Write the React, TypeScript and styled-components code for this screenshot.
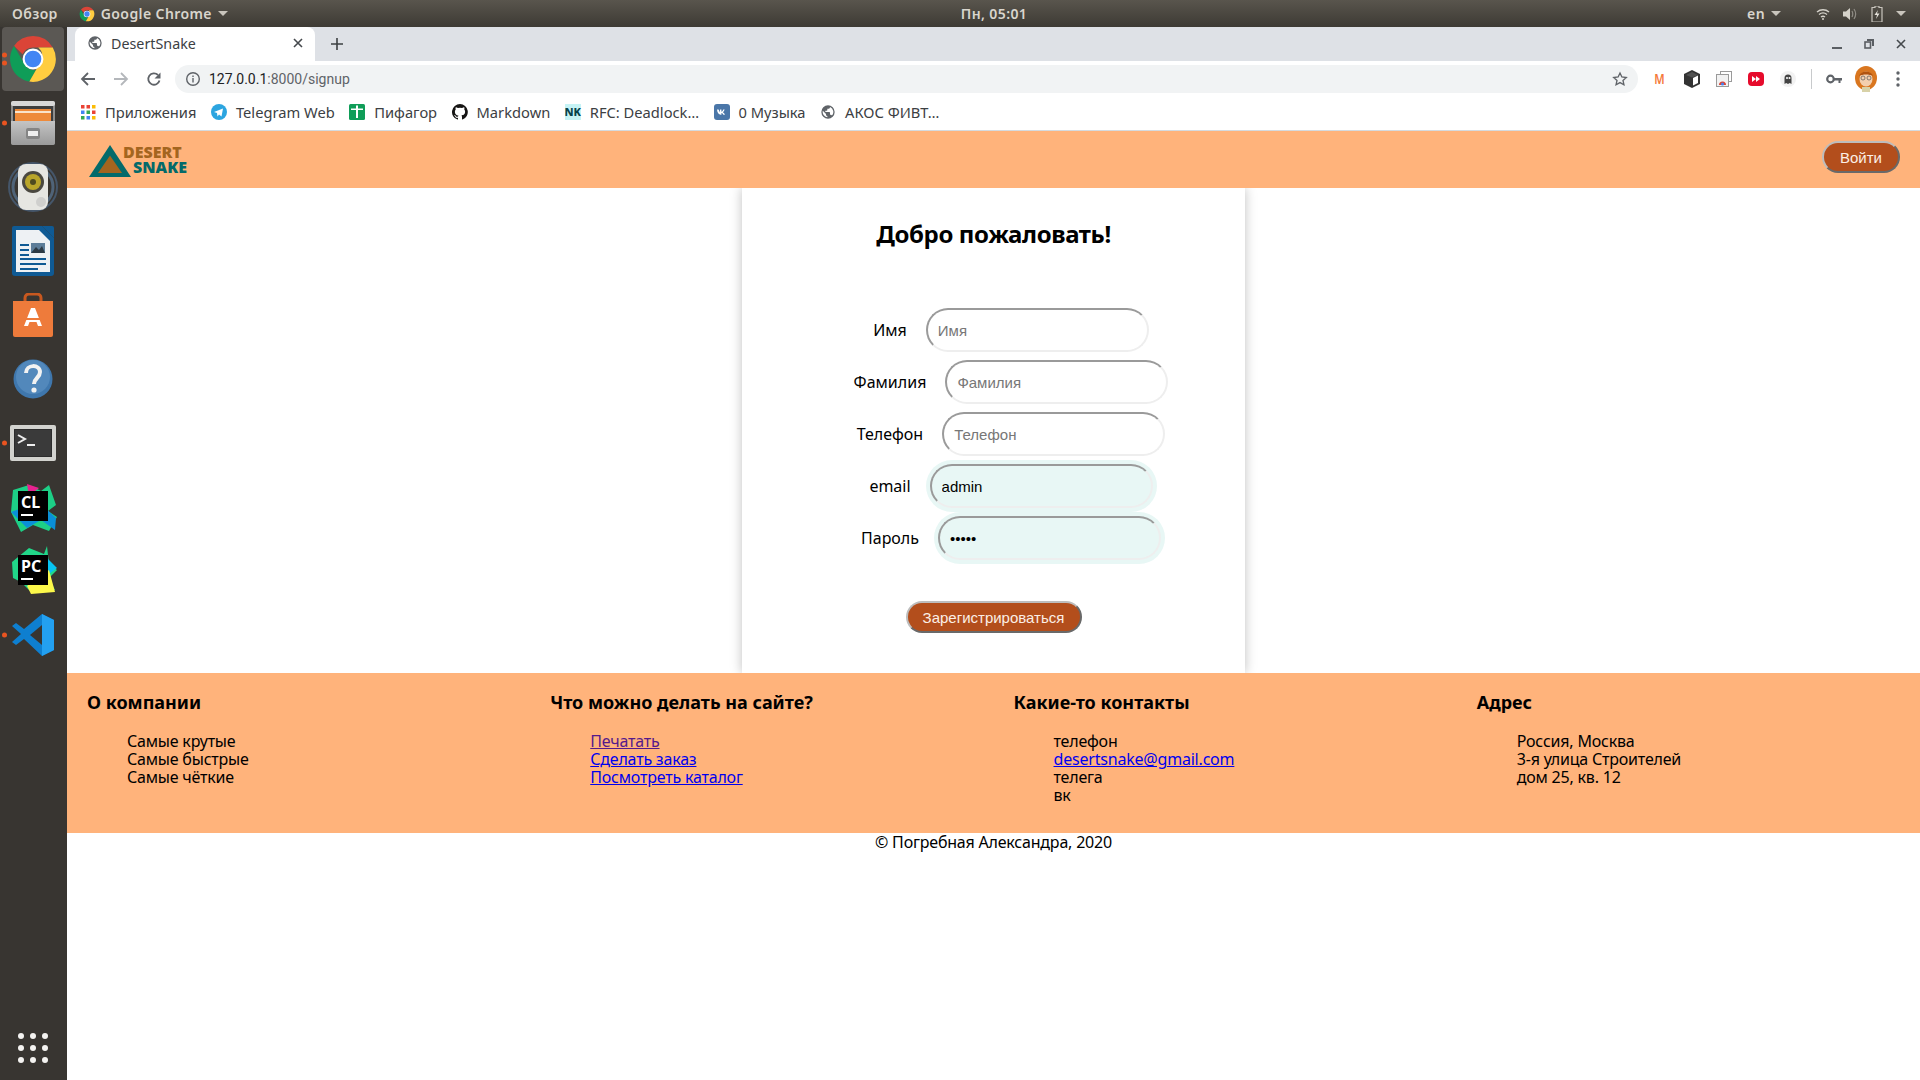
import React from 'react'
import styled, { createGlobalStyle } from 'styled-components'

const GlobalStyle = createGlobalStyle`
  html, body {
    margin: 0;
    padding: 0;
    background: #fff;
  }
  * {
    box-sizing: border-box;
  }
`

const uiFont = `'Noto Sans', 'Open Sans', sans-serif`
const peach = '#ffb37b'
const rust = '#b34e1c'

const Desktop = styled.div`
  width: 1920px;
  height: 1080px;
  display: flex;
  flex-direction: column;
  overflow: hidden;
  font-family: ${uiFont};
`

/* gnome top bar */
const TopBar = styled.div`
  height: 27px;
  flex: none;
  display: flex;
  align-items: center;
  background: linear-gradient(#59554d, #3d3a34);
  color: #d9d5cd;
  font-size: 14px;
  font-weight: 600;
  letter-spacing: 0.4px;
`

const TopLeft = styled.div`
  width: 278px;
  display: flex;
  align-items: center;
  padding-left: 12px;
`

const TopCenter = styled.div`
  flex: 1;
  text-align: center;
`

const TopRight = styled.div`
  width: 210px;
  display: flex;
  align-items: center;
  justify-content: flex-end;
  gap: 13px;
  padding-right: 14px;
`

const LangGroup = styled.div`
  display: flex;
  align-items: center;
  gap: 6px;
  margin-right: 22px;
`

const AppName = styled.div`
  display: flex;
  align-items: center;
  gap: 6px;
  margin-left: 21px;
`

const Caret = styled.span`
  width: 0;
  height: 0;
  border-left: 5px solid transparent;
  border-right: 5px solid transparent;
  border-top: 5px solid #c9c5bd;
`

const Workspace = styled.div`
  flex: 1;
  min-height: 0;
  display: flex;
`

const Dock = styled.div`
  width: 67px;
  flex: none;
  display: flex;
  flex-direction: column;
  background: #383531;
`

const DockItem = styled.div<{ $active?: boolean }>`
  position: relative;
  height: 64px;
  flex: none;
  margin: 0 3px 0 2px;
  display: flex;
  align-items: center;
  justify-content: center;
  border-radius: 4px;
  background: ${({ $active }) => ($active ? '#5b5854' : 'transparent')};
`

const DockApps = styled(DockItem)`
  margin-top: auto;
`

const RunDots = styled.div`
  position: absolute;
  left: 0;
  top: 50%;
  transform: translateY(-50%);
  display: flex;
  flex-direction: column;
  gap: 3px;
`

const RunDot = styled.span`
  width: 5px;
  height: 5px;
  border-radius: 50%;
  background: #e95420;
`

const AppGrid = styled.div`
  display: grid;
  grid-template-columns: repeat(3, 6px);
  gap: 6px;
`

const AppGridDot = styled.span`
  width: 6px;
  height: 6px;
  border-radius: 50%;
  background: #f4f3f1;
`

const Browser = styled.div`
  flex: 1;
  min-width: 0;
  display: flex;
  flex-direction: column;
  background: #fff;
`

const TabStrip = styled.div`
  height: 34px;
  flex: none;
  display: flex;
  align-items: flex-end;
  background: #dee1e6;
  padding-left: 8px;
`

const Tab = styled.div`
  width: 240px;
  height: 34px;
  display: flex;
  align-items: center;
  padding: 0 12px 2px 12px;
  background: #fff;
  border-radius: 8px 8px 0 0;
  font-size: 14.3px;
  color: #3c4043;
`

const TabTitle = styled.span`
  flex: 1;
  margin-left: 8px;
`

const NewTab = styled.div`
  width: 44px;
  height: 34px;
  display: flex;
  align-items: center;
  justify-content: center;
`

const WindowControls = styled.div`
  margin-left: auto;
  height: 34px;
  display: flex;
  align-items: center;
  gap: 22px;
  padding-right: 14px;
`

const Toolbar = styled.div`
  height: 35px;
  flex: none;
  display: flex;
  align-items: center;
  padding: 0 6px 0 13px;
`

const NavButtons = styled.div`
  display: flex;
  align-items: center;
  gap: 17px;
  margin-right: 13px;
`

const Omnibox = styled.div`
  width: 1463px;
  height: 28px;
  display: flex;
  align-items: center;
  padding: 0 10px 0 10px;
  border-radius: 14px;
  background: #f1f3f4;
  font-family: Roboto, sans-serif;
  font-size: 14px;
  color: #5f6368;
`

const UrlHost = styled.span`
  margin-left: 8px;
  color: #202124;
`

const StarSlot = styled.div`
  margin-left: auto;
  display: flex;
`

const Extensions = styled.div`
  margin-left: auto;
  display: flex;
  align-items: center;
`

const ExtSlot = styled.div`
  width: 32px;
  display: flex;
  align-items: center;
  justify-content: center;
`

const ToolbarSep = styled.span`
  width: 1px;
  height: 20px;
  margin: 0 6px 0 7px;
  background: #c8cacc;
`

const BookmarkBar = styled.div`
  height: 35px;
  flex: none;
  display: flex;
  align-items: center;
  gap: 14.5px;
  padding: 0 0 3px 13px;
  border-bottom: 1px solid #d6dbdf;
`

const Bookmark = styled.div`
  display: flex;
  align-items: center;
  gap: 9px;
  font-size: 14.7px;
  color: #3c4043;
  white-space: nowrap;
`

/* page itself */
const Page = styled.div`
  flex: 1;
  min-height: 0;
  display: flex;
  flex-direction: column;
  font-family: ${uiFont};
  color: #000;
`

const Header = styled.header`
  height: 57px;
  flex: none;
  display: flex;
  align-items: flex-start;
  justify-content: space-between;
  background: ${peach};
  padding: 10px 20px 0 22px;
`

const Logo = styled.div`
  display: flex;
  align-items: flex-start;
  padding-top: 4px;
`

const LogoWords = styled.div`
  display: flex;
  flex-direction: column;
  margin-left: -8px;
  font-family: 'Open Sans', sans-serif;
  font-weight: 800;
  font-size: 16px;
  line-height: 15px;
`

const LogoWord = styled.span<{ $snake?: boolean }>`
  color: ${({ $snake }) => ($snake ? '#046a6a' : '#a4651f')};
  padding-left: ${({ $snake }) => ($snake ? '10px' : '0')};
`

const PillButton = styled.button`
  height: 32px;
  padding: 0 16px;
  border: 2px outset #bdbdbd;
  border-radius: 16px;
  background: ${rust};
  color: #fbeee6;
  font-family: 'Liberation Sans', Arial, sans-serif;
  font-size: 15px;
`

const CardRow = styled.main`
  height: 485px;
  flex: none;
  display: flex;
  justify-content: center;
`

const Card = styled.section`
  width: 503px;
  display: flex;
  flex-direction: column;
  align-items: center;
  background: #fff;
  box-shadow: 0 0 11px rgba(0, 0, 0, 0.25);
  clip-path: inset(0 -14px 0 -14px);
  padding-top: 30px;
`

const Title = styled.h2`
  margin: 0;
  font-size: 24px;
  line-height: 32px;
  font-weight: 700;
  letter-spacing: -0.36px;
`

const Form = styled.form`
  width: 100%;
  margin-top: 54px;
  padding-left: 35px;
  display: flex;
  flex-direction: column;
  align-items: center;
`

const FieldRow = styled.div`
  height: 52px;
  display: flex;
  align-items: center;
  justify-content: center;
  gap: 19px;
`

const FieldLabel = styled.label`
  font-size: 16px;
  white-space: nowrap;
`

const TextInput = styled.input<{ $filled?: boolean }>`
  width: 223px;
  height: 44px;
  padding: 0 10px;
  border: 2px inset #eee;
  border-radius: 22px;
  outline: 0;
  font-family: 'Liberation Sans', Arial, sans-serif;
  font-size: 15px;
  color: #000;
  background: ${({ $filled }) => ($filled ? '#e8f7f5' : '#fff')};
  box-shadow: ${({ $filled }) => ($filled ? '0 0 0 4px #e8f7f5' : 'none')};

  &::placeholder {
    color: #777;
  }
`

const SubmitButton = styled(PillButton)`
  margin: 37px 0 0 -35px;
  width: 176px;
  padding: 0;
`

const Footer = styled.footer`
  height: 160px;
  flex: none;
  display: grid;
  grid-template-columns: repeat(4, 1fr);
  background: ${peach};
  padding-top: 17px;
`

const FooterCol = styled.div`
  padding-left: 20px;
`

const FooterHeading = styled.h3`
  margin: 0 0 18px;
  font-size: 18px;
  line-height: 24px;
  font-weight: 700;
`

const FooterList = styled.div`
  padding-left: 40px;
  font-size: 16px;
  line-height: 18px;
  letter-spacing: -0.2px;
`

const FooterLine = styled.div``

const FooterLink = styled.a<{ $visited?: boolean }>`
  color: ${({ $visited }) => ($visited ? '#551a8b' : '#0000ee')};
  text-decoration: underline;
`

const Copyright = styled.div`
  text-align: center;
  font-size: 16px;
  line-height: 18px;
  letter-spacing: -0.2px;
`

const MExt = styled.span`
  color: #f5793a;
  font-size: 14px;
  font-weight: 600;
  transform: scaleX(0.8);
`

const NkGlyph = styled.span`
  width: 16px;
  height: 16px;
  display: inline-flex;
  align-items: center;
  justify-content: center;
  background: #c6f3f5;
  color: #06424a;
  font-size: 11px;
  font-weight: 800;
`

/* drawings */
const ChromeIcon = ({ size = 50 }: { size?: number }) => (
  <svg width={size} height={size} viewBox="0 0 48 48">
    <path d="M24 2a22 22 0 0 1 19 11H24a11 11 0 0 0-10 6.500L5.800 11.600A22 22 0 0 1 24 2z" fill="#db4437" />
    <path d="M5.800 11.600l9.300 16A11 11 0 0 0 27 34.600L20.500 45.700A22 22 0 0 1 5.800 11.600z" fill="#0f9d58" />
    <path d="M43 13a22 22 0 0 1-22.500 32.700L30 29a11 11 0 0 0-1-16z" fill="#ffcd40" />
    <circle cx="24" cy="24" r="10" fill="#fff" />
    <circle cx="24" cy="24" r="8" fill="#4285f4" />
  </svg>
)

const FilesIcon = () => (
  <svg width="46" height="46" viewBox="0 0 46 46">
    <defs>
      <linearGradient id="cab" x1="0" y1="0" x2="0" y2="1">
        <stop offset="0" stopColor="#c4c4c4" />
        <stop offset="1" stopColor="#9a9a9a" />
      </linearGradient>
    </defs>
    <rect x="1" y="1" width="44" height="44" rx="3" fill="#8f8f8f" />
    <rect x="1" y="1" width="44" height="5" rx="2" fill="#d8d8d8" />
    <rect x="3" y="6" width="40" height="15" fill="#3e3e3e" />
    <rect x="5" y="9" width="36" height="12" fill="#ee8a3a" />
    <rect x="5" y="11" width="36" height="2" fill="#f9e3cb" />
    <path d="M1 21h44v22a2 2 0 0 1-2 2H3a2 2 0 0 1-2-2z" fill="url(#cab)" />
    <rect x="16" y="28" width="14" height="11" rx="2" fill="#858585" />
    <rect x="18" y="31" width="10" height="5" fill="#efefef" />
  </svg>
)

const SpeakerIcon = () => (
  <svg width="50" height="50" viewBox="0 0 50 50">
    <circle cx="25" cy="25" r="24" fill="none" stroke="#45566a" strokeWidth="2" />
    <circle cx="25" cy="25" r="20" fill="none" stroke="#4f6378" strokeWidth="3" />
    <rect x="10" y="2" width="30" height="46" rx="8" fill="#e6e6e2" />
    <circle cx="25" cy="20" r="11" fill="#4a4840" />
    <circle cx="25" cy="20" r="8" fill="#b9a52a" />
    <circle cx="25" cy="20" r="3" fill="#4e4a20" />
    <circle cx="33" cy="40" r="5" fill="#cfcfcd" />
  </svg>
)

const WriterIcon = () => (
  <svg width="42" height="50" viewBox="0 0 42 50">
    <path d="M2 0h28l12 12v35a3 3 0 0 1-3 3H3a3 3 0 0 1-3-3V2a2 2 0 0 1 2-2z" fill="#0f5a94" />
    <path d="M4 4h23l11 11v31H4z" fill="#eef1f4" />
    <path d="M30 0h10a2 2 0 0 1 2 2v10z" fill="#0f5a94" />
    <rect x="8" y="18" width="9" height="2" fill="#0f5a94" />
    <rect x="8" y="23" width="9" height="2" fill="#0f5a94" />
    <rect x="8" y="28" width="9" height="2" fill="#0f5a94" />
    <rect x="19" y="17" width="14" height="10" fill="#5d7d99" />
    <path d="M19 27l5-6 3 3 3-4 3 7z" fill="#2d3a45" />
    <rect x="8" y="32" width="26" height="2" fill="#0f5a94" />
    <rect x="8" y="37" width="26" height="2" fill="#0f5a94" />
    <rect x="8" y="42" width="18" height="2" fill="#0f5a94" />
  </svg>
)

const StoreIcon = () => (
  <svg width="42" height="44" viewBox="0 0 42 44">
    <path d="M13 10V5a4 4 0 0 1 4-4h8a4 4 0 0 1 4 4v5" fill="none" stroke="#c8581f" strokeWidth="3" />
    <path d="M1 8h40v34a2 2 0 0 1-2 2H3a2 2 0 0 1-2-2z" fill="#ee7b3b" />
    <path d="M12 33L19 15h4l7 18h-4l-1.500-4h-7L16 33z" fill="#fff" />
    <rect x="11" y="25" width="20" height="2" fill="#ee7b3b" />
  </svg>
)

const HelpIcon = () => (
  <svg width="40" height="40" viewBox="0 0 40 40">
    <circle cx="20" cy="20" r="19.500" fill="#3f77ad" />
    <circle cx="20" cy="18" r="17" fill="#5288bb" />
    <path d="M13 14c0-9 14-9 14-1 0 6-6 6-6 12" fill="none" stroke="#f2f2f2" strokeWidth="4" />
    <circle cx="21" cy="31" r="2.600" fill="#f2f2f2" />
  </svg>
)

const TerminalIcon = () => (
  <svg width="46" height="36" viewBox="0 0 46 36">
    <rect width="46" height="36" rx="2" fill="#d2d2ce" />
    <rect x="4" y="4" width="38" height="28" fill="#2c2c2c" />
    <rect x="5" y="5" width="36" height="26" fill="#3a3a3a" />
    <path d="M8 10l7 4-7 4" fill="none" stroke="#eee" strokeWidth="2" />
    <rect x="17" y="19" width="8" height="2" fill="#eee" />
  </svg>
)

const JetIcon = ({ kind }: { kind: 'cl' | 'pc' }) => (
  <svg width="48" height="50" viewBox="0 0 48 50">
    {kind === 'cl' ? (
      <>
        <path d="M4 8L20 3l12 6 8-6 7 20-8 6 9 6-8 14-16-6-12 7L2 30z" fill="#1dcf86" />
        <path d="M18 2l12 4-10 8z" fill="#e6228f" />
        <path d="M2 30l16 16 14-8 14 10 1-12L30 20z" fill="#0a8fd8" />
      </>
    ) : (
      <>
        <path d="M3 16L20 2l15 6 3-8 2 18 8 6-8 8 6 12-24 2-10-10-8-4z" fill="#21d789" />
        <path d="M34 8l14 14-8 6z" fill="#07c3f2" />
        <path d="M40 24l6 22-24 2-4-8z" fill="#fcf84a" />
      </>
    )}
    <rect x="9" y="9" width="30" height="30" fill="#000" />
    <text x="12" y="26" fill="#fff" fontSize="16" fontWeight="700" fontFamily="'Noto Sans', sans-serif">
      {kind === 'cl' ? 'CL' : 'PC'}
    </text>
    <rect x="12" y="32" width="12" height="2" fill="#fff" />
  </svg>
)

const VsCodeIcon = () => (
  <svg width="42" height="42" viewBox="0 0 42 42">
    <path d="M30 0l12 6v30l-12 6-18-17-8 6-4-3 9-8-9-8 4-3 8 6z" fill="#0e7fd0" />
    <path d="M30 0l12 6v30l-12 6z" fill="#23a0f0" />
    <path d="M30 11L18 21l12 10z" fill="#383531" />
  </svg>
)

const Globe = ({ color = '#5f6368' }: { color?: string }) => (
  <svg width="16" height="16" viewBox="0 0 24 24" fill={color}>
    <path d="M12 2a10 10 0 1 0 0 20 10 10 0 0 0 0-20zm-1 17.900A8 8 0 0 1 4.200 10.200L9 15v1a2 2 0 0 0 2 2zm6.900-2.500A2 2 0 0 0 16 16h-1v-3a1 1 0 0 0-1-1H8v-2h2a1 1 0 0 0 1-1V7h2a2 2 0 0 0 2-2v-.400a8 8 0 0 1 2.900 12.800z" />
  </svg>
)

const Arrow = ({ color, flip }: { color: string; flip?: boolean }) => (
  <svg width="16" height="16" viewBox="0 0 16 16" style={flip ? { transform: 'scaleX(-1)' } : undefined}>
    <path d="M15 8H2M8 2L2 8l6 6" fill="none" stroke={color} strokeWidth="1.800" />
  </svg>
)

const Reload = () => (
  <svg width="16" height="16" viewBox="0 0 16 16">
    <path d="M13.500 9.500A5.700 5.700 0 1 1 12 4" fill="none" stroke="#5f6368" strokeWidth="1.800" />
    <path d="M14.500 1.500v6h-6z" fill="#5f6368" />
  </svg>
)

const InfoIcon = () => (
  <svg width="16" height="16" viewBox="0 0 16 16">
    <circle cx="8" cy="8" r="6.300" fill="none" stroke="#5f6368" strokeWidth="1.400" />
    <rect x="7.300" y="7" width="1.400" height="4.500" fill="#5f6368" />
    <rect x="7.300" y="4.500" width="1.400" height="1.500" fill="#5f6368" />
  </svg>
)

const StarIcon = () => (
  <svg width="16" height="16" viewBox="0 0 24 24">
    <path d="M12 3l2.800 6 6.600.700-4.900 4.500 1.400 6.500L12 17.400l-5.900 3.300 1.400-6.500L2.600 9.700 9.200 9z" fill="none" stroke="#5f6368" strokeWidth="2" />
  </svg>
)

const CloseGlyph = ({ size = 10, weight = 1.600, color = '#45494d' }: { size?: number; weight?: number; color?: string }) => (
  <svg width={size} height={size} viewBox="0 0 10 10">
    <path d="M1 1l8 8M9 1l-8 8" stroke={color} strokeWidth={weight} />
  </svg>
)

const PlusGlyph = () => (
  <svg width="12" height="12" viewBox="0 0 12 12">
    <path d="M6 0v12M0 6h12" stroke="#3c4043" strokeWidth="1.600" />
  </svg>
)

const MinimizeGlyph = () => (
  <svg width="10" height="10" viewBox="0 0 10 10">
    <rect x="0" y="8" width="10" height="2" fill="#5a5e63" />
  </svg>
)

const RestoreGlyph = () => (
  <svg width="10" height="10" viewBox="0 0 10 10">
    <path d="M3 0h7v7H8V2H3z" fill="#5a5e63" />
    <rect x="1" y="3" width="5.500" height="6" fill="none" stroke="#5a5e63" strokeWidth="1.600" />
  </svg>
)

const Wifi = () => (
  <svg width="14" height="14" viewBox="0 0 14 14" fill="none" stroke="#d5d2ca" strokeWidth="1.400">
    <path d="M1 5c3.500-3 8.500-3 12 0M3 7.500c2.500-2 5.500-2 8 0M5 10c1.200-1 2.800-1 4 0" />
    <circle cx="7" cy="12" r="1" fill="#d5d2ca" stroke="none" />
  </svg>
)

const Volume = () => (
  <svg width="15" height="14" viewBox="0 0 15 14" fill="none">
    <path d="M0 4.500h3L7 1v12L3 9.500H0z" fill="#d5d2ca" />
    <path d="M9 4c1 2 1 4 0 6M11 2c2 3 2 7 0 10" stroke="#8f8c85" strokeWidth="1.200" />
  </svg>
)

const Battery = () => (
  <svg width="12" height="16" viewBox="0 0 12 16">
    <path d="M4 0h4v1.500h3V16H1V1.500h3z" fill="none" stroke="#c9c5bd" strokeWidth="1.200" />
    <path d="M7 4L3.500 9H6l-1 4 3.500-5.500H6z" fill="#e6e3dc" />
  </svg>
)

const CubeExt = () => (
  <svg width="16" height="18" viewBox="0 0 16 18">
    <path d="M8 0l8 4v10l-8 4-8-4V4z" fill="#333" />
    <path d="M9 8l5-2.500v7.500L9 15.500z" fill="#fff" />
    <path d="M2 5l6-3 6 3-6 2.500z" fill="#fff" fillOpacity="0.15" />
  </svg>
)

const TabsExt = () => (
  <svg width="16" height="16" viewBox="0 0 16 16">
    <rect x="4.500" y="0.500" width="11" height="10" fill="#fff" stroke="#9a9a9a" />
    <rect x="0.500" y="3.500" width="12" height="12" fill="#f2f2f2" stroke="#9a9a9a" />
    <path d="M3 14a3.500 3.500 0 0 1 7 0z" fill="#db4437" />
    <circle cx="6.500" cy="13" r="1.500" fill="#4285f4" />
  </svg>
)

const RedExt = () => (
  <svg width="16" height="14" viewBox="0 0 16 14">
    <rect width="16" height="14" rx="4" fill="#e60b2c" />
    <path d="M4 4l4 3-4 3zM8 4l4 3-4 3z" fill="#fff" />
  </svg>
)

const GhostExt = () => (
  <svg width="16" height="16" viewBox="0 0 16 16">
    <circle cx="8" cy="8" r="8" fill="#f2f2f2" />
    <path d="M4.500 13V7a3.500 3.500 0 0 1 7 0v6l-1.700-1-1.800 1-1.800-1z" fill="#444" />
    <circle cx="7" cy="7" r="1" fill="#fff" />
    <circle cx="9.500" cy="7" r="1" fill="#fff" />
  </svg>
)

const KeyIcon = () => (
  <svg width="16" height="10" viewBox="0 0 16 10">
    <circle cx="4.500" cy="5" r="3.300" fill="none" stroke="#5f6368" strokeWidth="2.200" />
    <path d="M8 4h8v2.500h-1.500V9h-2V6.500H8z" fill="#5f6368" />
  </svg>
)

const Avatar = () => (
  <svg width="22" height="26" viewBox="0 0 22 26">
    <ellipse cx="11" cy="12" rx="11" ry="12" fill="#d9761f" />
    <ellipse cx="11" cy="13" rx="6.500" ry="7.500" fill="#f3cfae" />
    <path d="M4 10c2-6 12-6 14 0-4-2-10-2-14 0z" fill="#b0530f" />
    <circle cx="8" cy="12" r="2" fill="none" stroke="#555" strokeWidth="0.700" />
    <circle cx="14" cy="12" r="2" fill="none" stroke="#555" strokeWidth="0.700" />
    <rect x="7" y="21" width="8" height="5" fill="#d8d2a8" />
  </svg>
)

const MenuDots = () => (
  <svg width="4" height="16" viewBox="0 0 4 16" fill="#5f6368">
    <circle cx="2" cy="2" r="1.700" />
    <circle cx="2" cy="8" r="1.700" />
    <circle cx="2" cy="14" r="1.700" />
  </svg>
)

const AppsGlyph = () => (
  <svg width="16" height="16" viewBox="0 0 16 16">
    {['#ea4335', '#ea4335', '#fbbc05', '#4285f4', '#34a853', '#ea4335', '#34a853', '#4285f4', '#fbbc05'].map((c, i) => (
      <rect key={i} x={1 + (i % 3) * 5.500} y={1 + Math.floor(i / 3) * 5.500} width="3.500" height="3.500" fill={c} />
    ))}
  </svg>
)

const TelegramGlyph = () => (
  <svg width="16" height="16" viewBox="0 0 16 16">
    <circle cx="8" cy="8" r="8" fill="#2ca5e0" />
    <path d="M3 8l9-3.500-1.500 8L8 10.500l-1.500 2-.5-3.500z" fill="#fff" />
  </svg>
)

const PifagorGlyph = () => (
  <svg width="16" height="16" viewBox="0 0 16 16">
    <rect width="16" height="16" rx="1.500" fill="#0f9d58" />
    <path d="M2 4.500h5V1.500h2v3h5v1.500H9v8H7V6H2z" fill="#fff" />
  </svg>
)

const GithubGlyph = () => (
  <svg width="16" height="16" viewBox="0 0 16 16" fill="#161514">
    <path d="M8 0a8 8 0 0 0-2.500 15.600c.4.100.5-.2.500-.4v-1.400c-2.200.5-2.700-1-2.700-1-.4-.9-.9-1.200-.9-1.200-.7-.5.100-.5.100-.5.800.1 1.200.8 1.200.8.700 1.200 1.900.9 2.300.7.100-.5.300-.9.500-1.100-1.800-.2-3.600-.9-3.600-4 0-.9.300-1.600.8-2.100-.1-.2-.4-1 .1-2.100 0 0 .7-.2 2.200.8a7.600 7.600 0 0 1 4 0c1.500-1 2.200-.8 2.200-.8.4 1.100.2 1.900.1 2.100.5.600.8 1.300.8 2.100 0 3.100-1.900 3.700-3.700 3.900.3.300.6.800.6 1.500v2.200c0 .2.100.5.600.4A8 8 0 0 0 8 0z" />
  </svg>
)

const VkGlyph = () => (
  <svg width="16" height="16" viewBox="0 0 16 16">
    <rect width="16" height="16" rx="3" fill="#4a76a8" />
    <path d="M3 5.500h1.600l1.400 3V5.500h1.400v2.300c.9-.2 1.500-1.200 1.800-2.300h1.400c-.2 1.200-1 2.200-1.700 2.700.8.400 1.600 1.200 2 2.500H9.300c-.3-.9-1-1.500-1.900-1.600v1.600h-.6C4.600 10.700 3.300 8.700 3 5.500z" fill="#fff" />
  </svg>
)

const LogoMark = () => (
  <svg width="42" height="32" viewBox="0 0 42 32">
    <path d="M21 0l21 32H0z" fill="#046a6a" />
    <path d="M21 10.500L33 28H9z" fill="#a4651f" />
  </svg>
)

const dock: { icon: React.ReactNode; dots?: number; active?: boolean }[] = [
  { icon: <ChromeIcon />, dots: 2, active: true },
  { icon: <FilesIcon />, dots: 1 },
  { icon: <SpeakerIcon /> },
  { icon: <WriterIcon /> },
  { icon: <StoreIcon /> },
  { icon: <HelpIcon /> },
  { icon: <TerminalIcon />, dots: 1 },
  { icon: <JetIcon kind="cl" /> },
  { icon: <JetIcon kind="pc" /> },
  { icon: <VsCodeIcon />, dots: 1 },
]

const bookmarks: { icon: React.ReactNode; label: string }[] = [
  { icon: <AppsGlyph />, label: 'Приложения' },
  { icon: <TelegramGlyph />, label: 'Telegram Web' },
  { icon: <PifagorGlyph />, label: 'Пифагор' },
  { icon: <GithubGlyph />, label: 'Markdown' },
  { icon: <NkGlyph>NK</NkGlyph>, label: 'RFC: Deadlock…' },
  { icon: <VkGlyph />, label: '0 Музыка' },
  { icon: <Globe />, label: 'АКОС ФИВТ…' },
]

const fields: { label: string; placeholder?: string; value?: string; type?: string }[] = [
  { label: 'Имя', placeholder: 'Имя' },
  { label: 'Фамилия', placeholder: 'Фамилия' },
  { label: 'Телефон', placeholder: 'Телефон' },
  { label: 'email', value: 'admin' },
  { label: 'Пароль', value: 'admin', type: 'password' },
]

const App = () => {
  return (
    <Desktop>
      <GlobalStyle />
      <TopBar>
        <TopLeft>
          Обзор
          <AppName>
            <ChromeIcon size={16} />
            Google Chrome
            <Caret />
          </AppName>
        </TopLeft>
        <TopCenter>Пн, 05:01</TopCenter>
        <TopRight>
          <LangGroup>
            <span>en</span>
            <Caret />
          </LangGroup>
          <Wifi />
          <Volume />
          <Battery />
          <Caret />
        </TopRight>
      </TopBar>
      <Workspace>
        <Dock>
          {dock.map((item, i) => (
            <DockItem key={i} $active={item.active}>
              {item.dots && (
                <RunDots>
                  {Array.from({ length: item.dots }).map((_, d) => (
                    <RunDot key={d} />
                  ))}
                </RunDots>
              )}
              {item.icon}
            </DockItem>
          ))}
          <DockApps>
            <AppGrid>
              {Array.from({ length: 9 }).map((_, i) => (
                <AppGridDot key={i} />
              ))}
            </AppGrid>
          </DockApps>
        </Dock>
        <Browser>
          <TabStrip>
            <Tab>
              <Globe />
              <TabTitle>DesertSnake</TabTitle>
              <CloseGlyph />
            </Tab>
            <NewTab>
              <PlusGlyph />
            </NewTab>
            <WindowControls>
              <MinimizeGlyph />
              <RestoreGlyph />
              <CloseGlyph />
            </WindowControls>
          </TabStrip>
          <Toolbar>
            <NavButtons>
              <Arrow color="#5f6368" />
              <Arrow color="#b4b7bb" flip />
              <Reload />
            </NavButtons>
            <Omnibox>
              <InfoIcon />
              <UrlHost>127.0.0.1</UrlHost>
              :8000/signup
              <StarSlot>
                <StarIcon />
              </StarSlot>
            </Omnibox>
            <Extensions>
              <ExtSlot><MExt>M</MExt></ExtSlot>
              <ExtSlot><CubeExt /></ExtSlot>
              <ExtSlot><TabsExt /></ExtSlot>
              <ExtSlot><RedExt /></ExtSlot>
              <ExtSlot><GhostExt /></ExtSlot>
              <ToolbarSep />
              <ExtSlot><KeyIcon /></ExtSlot>
              <ExtSlot><Avatar /></ExtSlot>
              <ExtSlot><MenuDots /></ExtSlot>
            </Extensions>
          </Toolbar>
          <BookmarkBar>
            {bookmarks.map((b) => (
              <Bookmark key={b.label}>
                {b.icon}
                {b.label}
              </Bookmark>
            ))}
          </BookmarkBar>
          <Page>
            <Header>
              <Logo>
                <LogoMark />
                <LogoWords>
                  <LogoWord>DESERT</LogoWord>
                  <LogoWord $snake>SNAKE</LogoWord>
                </LogoWords>
              </Logo>
              <PillButton type="button">Войти</PillButton>
            </Header>
            <CardRow>
              <Card>
                <Title>Добро пожаловать!</Title>
                <Form>
                  {fields.map((f) => (
                    <FieldRow key={f.label}>
                      <FieldLabel>{f.label}</FieldLabel>
                      <TextInput
                        type={f.type || 'text'}
                        placeholder={f.placeholder}
                        defaultValue={f.value}
                        $filled={!!f.value}
                      />
                    </FieldRow>
                  ))}
                  <SubmitButton type="button">Зарегистрироваться</SubmitButton>
                </Form>
              </Card>
            </CardRow>
            <Footer>
              <FooterCol>
                <FooterHeading>О компании</FooterHeading>
                <FooterList>
                  <FooterLine>Самые крутые</FooterLine>
                  <FooterLine>Самые быстрые</FooterLine>
                  <FooterLine>Самые чёткие</FooterLine>
                </FooterList>
              </FooterCol>
              <FooterCol>
                <FooterHeading>Что можно делать на сайте?</FooterHeading>
                <FooterList>
                  <FooterLine><FooterLink href="#" $visited>Печатать</FooterLink></FooterLine>
                  <FooterLine><FooterLink href="#">Сделать заказ</FooterLink></FooterLine>
                  <FooterLine><FooterLink href="#">Посмотреть каталог</FooterLink></FooterLine>
                </FooterList>
              </FooterCol>
              <FooterCol>
                <FooterHeading>Какие-то контакты</FooterHeading>
                <FooterList>
                  <FooterLine>телефон</FooterLine>
                  <FooterLine><FooterLink href="#">desertsnake@gmail.com</FooterLink></FooterLine>
                  <FooterLine>телега</FooterLine>
                  <FooterLine>вк</FooterLine>
                </FooterList>
              </FooterCol>
              <FooterCol>
                <FooterHeading>Адрес</FooterHeading>
                <FooterList>
                  <FooterLine>Россия, Москва</FooterLine>
                  <FooterLine>3-я улица Строителей</FooterLine>
                  <FooterLine>дом 25, кв. 12</FooterLine>
                </FooterList>
              </FooterCol>
            </Footer>
            <Copyright>© Погребная Александра, 2020</Copyright>
          </Page>
        </Browser>
      </Workspace>
    </Desktop>
  )
}

export default App
